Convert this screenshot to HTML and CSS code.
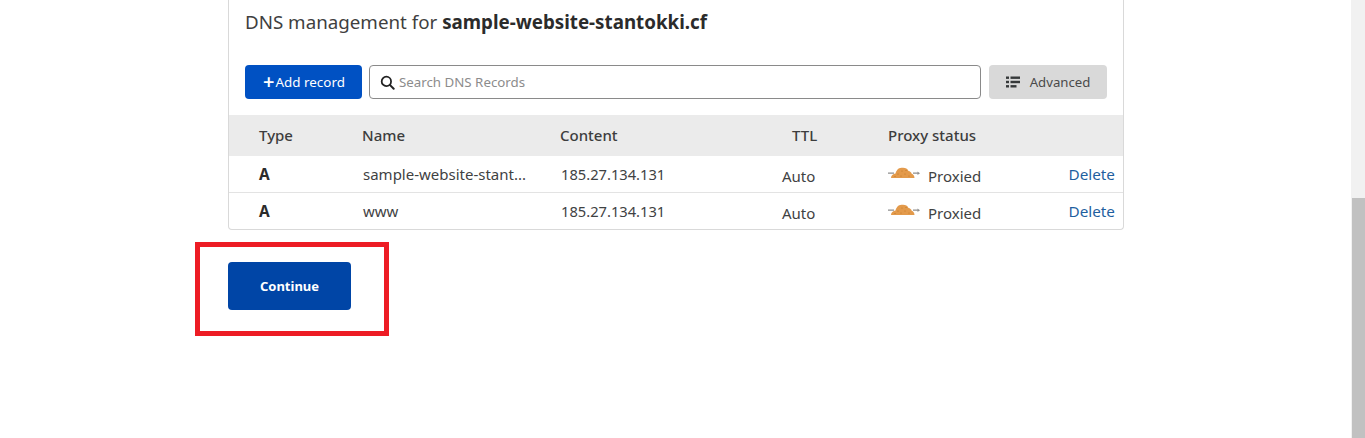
FILE: index.html
```html
<!DOCTYPE html>
<html lang="en">
<head>
<meta charset="utf-8">
<title>DNS management</title>
<link rel="stylesheet" href="styles.css">
</head>
<body>
<svg class="defs" width="0" height="0"><defs>
  <symbol id="cloud" viewBox="0 0 32 12">
    <path d="M0 6.200h6M25 6.200h5" stroke="#8f8f8f" stroke-width="1.300"/>
    <path d="M29.500 4.500 32 6.200 29.500 8z" fill="#8f8f8f"/>
    <path d="M3 11C3 8.500 5 7 7.500 6.500 8.500 3.500 10 1 13.500.800c3-.4 6 .2 7 3.200 1.500 0 3 1.500 3.200 2.800 1.500.4 2.800 2.200 2.800 4.200z" fill="#e39a4b"/>
    <g fill="#bf7426"><circle cx="10" cy="7" r=".6"/><circle cx="14" cy="4" r=".6"/><circle cx="17" cy="7" r=".6"/><circle cx="13" cy="9" r=".6"/><circle cx="21" cy="9" r=".6"/><circle cx="7" cy="9.500" r=".6"/><circle cx="18" cy="3.500" r=".6"/></g>
  </symbol>
</defs></svg>
<div class="page">
  <main class="content">
    <section class="card">
      <h2 class="title">DNS management for <b>sample-website-stantokki.cf</b></h2>
      <div class="toolbar">
        <button class="btn-add"><span class="plus">+</span>Add record</button>
        <label class="search">
          <svg class="search-icon" viewBox="0 0 16 16" width="15" height="15"><circle cx="6.800" cy="6.800" r="5" fill="none" stroke="#222" stroke-width="1.900"/><path d="M10.500 10.500 14.600 14.600" stroke="#222" stroke-width="2.100" stroke-linecap="round"/></svg>
          <span class="placeholder">Search DNS Records</span>
        </label>
        <button class="btn-adv">
          <svg viewBox="0 0 14 12" width="14" height="12"><g fill="#36393a"><rect x="0" y="0.500" width="3" height="2.400"/><rect x="4.500" y="0.500" width="9.500" height="2.400"/><rect x="0" y="4.800" width="3" height="2.400"/><rect x="4.500" y="4.800" width="9.500" height="2.400"/><rect x="0" y="9.100" width="3" height="2.400"/><rect x="4.500" y="9.100" width="6" height="2.400"/></g></svg>
          <span>Advanced</span>
        </button>
      </div>
      <div class="row head">
        <span>Type</span><span>Name</span><span>Content</span><span class="ttl-head">TTL</span><span>Proxy status</span><span></span>
      </div>
      <div class="row rec">
        <b class="type">A</b><span>sample-website-stant...</span><span class="ip">185.27.134.131</span><span class="low">Auto</span>
        <span class="proxy low"><svg class="cloud" width="32" height="12"><use href="#cloud"/></svg>Proxied</span>
        <a class="del">Delete</a>
      </div>
      <div class="row rec">
        <b class="type">A</b><span>www</span><span class="ip">185.27.134.131</span><span class="low">Auto</span>
        <span class="proxy low"><svg class="cloud" width="32" height="12"><use href="#cloud"/></svg>Proxied</span>
        <a class="del">Delete</a>
      </div>
    </section>
    <button class="btn-continue">Continue</button>
  </main>
  <div class="scrollbar"><div class="thumb"></div></div>
</div>
<div class="highlight"></div>
</body>
</html>
```
FILE: styles.css
```css
* { box-sizing: border-box; }
html, body { margin: 0; height: 100%; overflow: hidden; background: #fff; }
body { font-family: "Noto Sans", "Open Sans", sans-serif; color: #3f4243; }
.defs { position: absolute; }
.page { display: flex; height: 438px; }
.content { flex: 1; padding-left: 228px; }
.card { width: 896px; height: 230px; border: 1px solid #d9d9d9; border-top: 0; border-radius: 0 0 4px 4px; }
.title { margin: 0; padding: 8px 0 0 16px; height: 65px; font-size: 18.750px; line-height: 28px; font-weight: 400; color: #3f3f3f; }
.title b { font-weight: 700; color: #2b2b2b; }
.toolbar { display: flex; gap: 7px; padding-left: 16px; height: 50px; }
.toolbar button, .search { height: 34px; border-radius: 4px; font-family: inherit; font-size: 13.400px; }
.btn-add { width: 117px; border: 0; background: #0051c3; color: #fff; padding: 0 0 0 1px; display: flex; align-items: center; justify-content: center; }
.plus { font-size: 20px; font-weight: 600; line-height: 1; margin-right: 1px; }
.search { width: 612px; border: 1px solid #8a8a8a; display: flex; align-items: center; padding-left: 10px; gap: 4px; background: #fff; }
.placeholder { color: #8c8c8c; font-size: 13.300px; }
.toolbar .btn-adv { width: 118px; margin-left: 1px; border: 0; background: #d9d9d9; color: #4a4a4a; display: flex; align-items: center; justify-content: center; gap: 10px; padding: 0; font-size: 13.200px; }
.row { display: grid; grid-template-columns: 103px 198px 222px 106px 1fr auto; align-items: center; padding: 0 8px 0 30px; font-size: 15px; }
.head { height: 41px; background: #ebebeb; font-weight: 500; font-size: 15px; color: #3d3d3d; padding-bottom: 1px; }
.ttl-head { padding-left: 10px; }
.rec { height: 37px; border-bottom: 1px solid #e3e3e3; }
.rec:last-child { height: 36px; border-bottom: 0; }
.rec span:nth-child(2) { padding-left: 1px; }
.rec .ip { padding-left: 1px; font-size: 14.700px; }
.type { color: #2b2b2b; font-size: 15.500px; }
.low { position: relative; top: 2px; }
.proxy { display: flex; align-items: center; gap: 8px; }
.cloud { position: relative; top: -3px; }
.del { color: #1f5f9f; font-size: 15.300px; }
.btn-continue { display: block; margin-top: 32px; width: 123px; height: 48px; border: 0; border-radius: 4px; background: #0045a6; color: #fff; font-family: inherit; font-size: 13px; font-weight: 700; padding: 0; }
.scrollbar { width: 14px; height: 438px; background: #f1f1f1; padding-top: 198px; padding-left: 1px; }
.thumb { height: 240px; background: #c1c1c1; }
.highlight { position: absolute; left: 195px; top: 242px; width: 194px; height: 94px; border: 5px solid #ed1c24; }
```
